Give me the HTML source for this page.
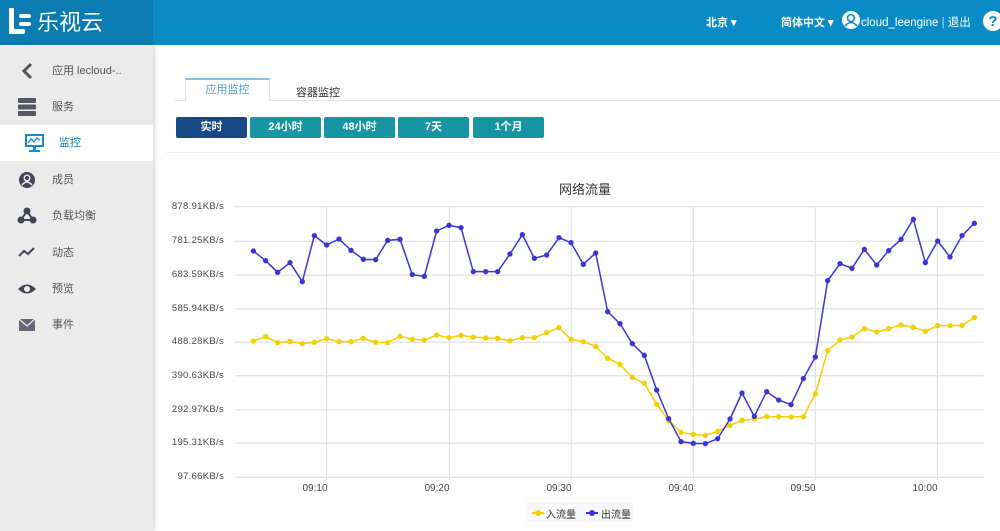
<!DOCTYPE html><html><head><meta charset="utf-8"><style>
*{margin:0;padding:0;box-sizing:border-box}
body{width:1000px;height:531px;overflow:hidden;background:#fff;font-family:"Liberation Sans","Noto Sans CJK SC",sans-serif;position:relative}
.hdr{position:absolute;left:0;top:0;width:1000px;height:45px;background:#0b8bc6}
.logo{position:absolute;left:0;top:0;width:153px;height:45px;background:#0a7cb2;color:#fff}
.side{position:absolute;left:0;top:45px;width:153px;height:486px;background:#ebebeb;box-shadow:2px 0 4px rgba(0,0,0,.15)}
.it{position:absolute;left:0;width:153px;height:36px;font-size:11px;color:#555;line-height:36px}
.it span{position:absolute;left:52px}
.it svg{position:absolute;left:17px;top:8px}
.ab{position:absolute;font-size:11px;color:#fff;font-weight:bold}
.btn{position:absolute;top:117px;height:21px;width:71px;background:#1895a2;color:#fff;font-size:11px;font-weight:bold;text-align:center;line-height:21px;border-radius:2px}
.yl{position:absolute;left:160px;width:64px;text-align:right;font-size:9.5px;color:#444;letter-spacing:.3px}
.xl{position:absolute;top:483px;font-size:10px;color:#444;width:40px;text-align:center}
</style></head><body>
<div class="hdr"></div>
<div class="logo">
<svg width="40" height="40" style="position:absolute;left:6px;top:4px"><rect x="3" y="4" width="5" height="26" rx="1" fill="#fff"/><rect x="3" y="25" width="16" height="5" rx="2" fill="#fff"/><rect x="13" y="10" width="12" height="4" rx="2" fill="#fff"/><rect x="13" y="18" width="12" height="4" rx="2" fill="#fff"/></svg>
<div style="position:absolute;left:37px;top:6px;font-size:22px;line-height:30px;font-family:'Noto Sans CJK SC',sans-serif;letter-spacing:0">乐视云</div></div>
<div class="ab" style="left:706px;top:14px">北京 ▾</div>
<div class="ab" style="left:781px;top:14px">简体中文 ▾</div>
<svg style="position:absolute;left:841px;top:10px" width="20" height="20"><circle cx="10" cy="10" r="9" fill="#fff"/><circle cx="10" cy="8" r="3.5" fill="none" stroke="#0b8bc6" stroke-width="1.6"/><path d="M4 16 Q10 9 16 16" fill="none" stroke="#0b8bc6" stroke-width="1.6"/></svg>
<div class="ab" style="left:861px;top:14px;font-weight:normal;font-size:11.5px">cloud_leengine <span style="opacity:.7">|</span> 退出</div>
<svg style="position:absolute;left:982px;top:10px" width="22" height="22"><circle cx="11" cy="11" r="10" fill="#fff"/><text x="11" y="16" text-anchor="middle" font-size="15" font-weight="bold" fill="#0b8bc6" font-family="Liberation Sans">?</text></svg>
<div class="side">
<div class="it" style="top:8px"><svg width="20" height="20"><path d="M14 3 L7 10 L14 17" fill="none" stroke="#555" stroke-width="3"/></svg><span>应用 lecloud-..</span></div>
<div class="it" style="top:44px"><svg width="20" height="20"><rect x="1" y="1" width="18" height="5" rx="1" fill="#556"/><rect x="1" y="7.5" width="18" height="5" rx="1" fill="#556"/><rect x="1" y="14" width="18" height="5" rx="1" fill="#556"/></svg><span>服务</span></div>
<div class="it" style="top:80px;background:#fff;color:#1a7fb5"><svg width="22" height="20" style="left:24px"><rect x="1" y="1" width="19" height="13" fill="#1a8cc6"/><rect x="3" y="3" width="15" height="9" fill="#fff"/><path d="M4 10 L7 6 L10 9 L13 5 L16 7" fill="none" stroke="#1a8cc6" stroke-width="1.3"/><rect x="9" y="14" width="3" height="3" fill="#1a8cc6"/><rect x="5" y="17" width="11" height="2" fill="#1a8cc6"/></svg><span style="left:59px">监控</span></div>
<div class="it" style="top:117px"><svg width="20" height="20"><circle cx="10" cy="10" r="8" fill="#445"/><circle cx="10" cy="8" r="2.8" fill="none" stroke="#eee" stroke-width="1.4"/><path d="M5 15 Q10 9 15 15" fill="none" stroke="#eee" stroke-width="1.4"/></svg><span>成员</span></div>
<div class="it" style="top:153px"><svg width="20" height="20"><path d="M10 5 L4 14 L16 14 Z" fill="none" stroke="#445" stroke-width="2"/><circle cx="10" cy="5" r="3.5" fill="#445"/><circle cx="4" cy="14" r="3.5" fill="#445"/><circle cx="16" cy="14" r="3.5" fill="#445"/></svg><span>负载均衡</span></div>
<div class="it" style="top:190px"><svg width="20" height="20"><path d="M2 13 L7 8 L11 11 L17 5" fill="none" stroke="#445" stroke-width="2"/></svg><span>动态</span></div>
<div class="it" style="top:226px"><svg width="20" height="20"><path d="M1 10 Q10 1 19 10 Q10 19 1 10Z" fill="#445"/><circle cx="10" cy="10" r="3" fill="#eee"/></svg><span>预览</span></div>
<div class="it" style="top:262px"><svg width="20" height="20"><rect x="2" y="4" width="16" height="12" fill="#667"/><path d="M2 4 L10 11 L18 4" fill="none" stroke="#eee" stroke-width="1.2"/></svg><span>事件</span></div>
</div>
<div style="position:absolute;left:175px;top:100px;width:825px;border-top:1px solid #e3e3e3"></div>
<div style="position:absolute;left:185px;top:78px;width:85px;height:23px;border:1px solid #e3e3e3;border-top:2px solid #8cc0dc;border-bottom:none;background:#fff;color:#5b9bc8;font-size:11px;text-align:center;line-height:21px">应用监控</div>
<div style="position:absolute;left:296px;top:84px;font-size:11px;color:#333">容器监控</div>
<div class="btn" style="left:176px;background:#164a87">实时</div>
<div class="btn" style="left:250px">24小时</div>
<div class="btn" style="left:324px">48小时</div>
<div class="btn" style="left:398px">7天</div>
<div class="btn" style="left:473px">1个月</div>
<div style="position:absolute;left:167px;top:152px;width:833px;border-top:1px solid #f0f0f0"></div>
<div style="position:absolute;left:545px;top:179px;width:80px;text-align:center;font-size:13px;color:#333">网络流量</div>
<div class="yl" style="top:201px">878.91KB/s</div><div class="yl" style="top:235px">781.25KB/s</div><div class="yl" style="top:269px">683.59KB/s</div><div class="yl" style="top:303px">585.94KB/s</div><div class="yl" style="top:336px">488.28KB/s</div><div class="yl" style="top:370px">390.63KB/s</div><div class="yl" style="top:404px">292.97KB/s</div><div class="yl" style="top:437px">195.31KB/s</div><div class="yl" style="top:471px">97.66KB/s</div>
<div class="xl" style="left:295px">09:10</div><div class="xl" style="left:417px">09:20</div><div class="xl" style="left:539px">09:30</div><div class="xl" style="left:661px">09:40</div><div class="xl" style="left:783px">09:50</div><div class="xl" style="left:905px">10:00</div>
<svg style="position:absolute;left:230px;top:200px" width="760" height="280" viewBox="0 0 2280 840">
<defs><marker id="my" markerUnits="userSpaceOnUse" markerWidth="20" markerHeight="20" refX="10" refY="10"><circle cx="10" cy="10" r="8" fill="#f5d000"/></marker>
<marker id="mb" markerUnits="userSpaceOnUse" markerWidth="20" markerHeight="20" refX="10" refY="10"><circle cx="10" cy="10" r="8" fill="#3b35d8"/></marker></defs>
<g stroke="#e4e4e8" stroke-width="4"><path d="M15 20H2260M15 124H2260M15 226H2260M15 326H2260M15 427H2260M15 527H2260M15 630H2260M15 730H2260M15 832H2260"/><path d="M290 20V840M658 20V840M1024 20V840M1390 20V840M1756 20V840M2122 20V840"/></g>
<polyline fill="none" stroke="#f5d000" stroke-width="4.5" marker-start="url(#my)" marker-mid="url(#my)" marker-end="url(#my)" points="70,423 107,410 143,428 180,424 217,431 253,427 290,416 327,425 363,425 400,415 437,427 473,428 510,409 547,418 583,420 620,405 657,413 693,406 730,411 767,414 803,415 840,422 877,413 913,413 950,398 987,383 1023,418 1060,425 1097,439 1133,475 1170,493 1207,532 1243,550 1280,613 1316,662 1353,697 1390,703 1426,706 1463,694 1500,676 1536,661 1573,657 1610,650 1646,650 1683,651 1720,650 1756,582 1793,452 1830,420 1866,411 1903,386 1940,396 1976,386 2013,375 2050,382 2086,394 2123,377 2160,377 2196,376 2233,353"/>
<polyline fill="none" stroke="#3b35d8" stroke-width="4.5" marker-start="url(#mb)" marker-mid="url(#mb)" marker-end="url(#mb)" points="70,153 107,182 143,217 180,188 217,245 253,107 290,135 327,117 363,151 400,178 437,179 473,121 510,118 547,224 583,229 620,93 657,76 693,83 730,215 767,215 803,215 840,162 877,104 913,175 950,165 987,113 1023,128 1060,193 1097,159 1133,335 1170,371 1207,431 1243,466 1280,570 1316,656 1353,725 1390,730 1426,731 1463,716 1500,657 1536,579 1573,649 1610,575 1646,600 1683,614 1720,536 1756,471 1793,242 1830,191 1866,205 1903,148 1940,195 1976,152 2013,118 2050,58 2086,188 2123,123 2160,171 2196,107 2233,70"/>
</svg>
<div style="position:absolute;left:526px;top:502px;width:107px;height:20px;background:#f7f8fa"></div>
<svg style="position:absolute;left:530px;top:507px" width="100" height="12"><path d="M2 6H14" stroke="#f5d000" stroke-width="2"/><circle cx="8" cy="6" r="3" fill="#f5d000"/><path d="M56 6H68" stroke="#3b35d8" stroke-width="2"/><circle cx="62" cy="6" r="3" fill="#3b35d8"/></svg>
<div style="position:absolute;left:546px;top:506px;font-size:10px;color:#333">入流量</div>
<div style="position:absolute;left:601px;top:506px;font-size:10px;color:#333">出流量</div>
</body></html>
